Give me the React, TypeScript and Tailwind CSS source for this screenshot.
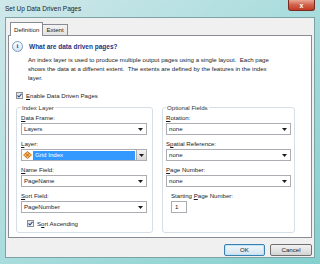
import React from 'react';

const Arrow = () => (
  <svg width="5" height="3" viewBox="0 0 5 3" className="shrink-0">
    <path d="M0 0 L5 0 L2.5 3 Z" fill="#1a1a1a" />
  </svg>
);

const U = ({ children }: { children: React.ReactNode }) => <span className="underline underline-offset-[1px]">{children}</span>;

const Dropdown = ({ value }: { value: string }) => (
  <div className="mt-[1px] flex h-[12px] items-center justify-between border border-[#abadb3] bg-white pl-[2px] pr-[3px]">
    <span className="leading-none">{value}</span>
    <Arrow />
  </div>
);

const Field = ({ label, children }: { label: React.ReactNode; children: React.ReactNode }) => (
  <div className="mb-[4px]">
    <div className="h-[9px] leading-[9px]">{label}</div>
    {children}
  </div>
);

const Checkbox = () => (
  <div className="flex h-[7px] w-[7px] items-center justify-center border border-[#8e8f8f] bg-gradient-to-br from-[#dcdcdc] to-white">
    <svg width="5" height="5" viewBox="0 0 5 5">
      <path d="M0.5 2.5 L2 4 L4.5 0.8" stroke="#2b4a8b" strokeWidth="1.1" fill="none" />
    </svg>
  </div>
);

const LayerIcon = () => (
  <svg width="9" height="8" viewBox="0 0 9 8" className="shrink-0">
    <path d="M4.5 0.5 L8.5 4 L4.5 7.5 L0.5 4 Z" fill="#f3c13a" stroke="#b5651d" strokeWidth="0.8" />
    <path d="M2.5 2.3 L6.5 5.7 M6.5 2.3 L2.5 5.7" stroke="#c0392b" strokeWidth="0.7" />
  </svg>
);

const InfoIcon = () => (
  <div className="flex h-[11px] w-[11px] items-center justify-center rounded-full border border-[#7d9cc4] bg-gradient-to-b from-white to-[#d6e4f5]">
    <span className="font-['Liberation_Serif',serif] text-[7px] font-bold leading-none text-[#2c5aa0]">i</span>
  </div>
);

export default function App() {
  return (
    <div className="flex h-[264px] w-[320px] flex-col bg-gradient-to-br from-[#cfe8ea] via-[#a9dcdd] to-[#84d0ce] px-[5px] pb-[6px] font-['Liberation_Sans',sans-serif] text-[6.1px] text-[#1b1b1b]">
      {/* title bar */}
      <div className="flex h-[17px] items-start">
        <span className="pt-[4px] text-[6.5px] leading-[9px] text-[#222]">Set Up Data Driven Pages</span>
        <div className="ml-auto flex h-[11px] w-[27px] items-center justify-center rounded-b-[3px] border border-t-0 border-[#7a2b1f] bg-gradient-to-b from-[#e9a796] via-[#d0604a] to-[#c13b22]">
          <span className="text-[7px] font-bold leading-none text-white">x</span>
        </div>
      </div>

      {/* dialog body */}
      <div className="flex flex-1 flex-col border border-[#7ea3a6] bg-[#f0f0f0] px-[2px] pt-[4px]">
        {/* tabs */}
        <div className="flex items-end pl-[2px]">
          <div className="relative z-10 -mb-px flex h-[14px] items-center border border-b-0 border-[#898c95] bg-white px-[3px]">Definition</div>
          <div className="flex h-[11px] items-center border border-b-0 border-l-0 border-[#898c95] bg-gradient-to-b from-[#f3f3f3] to-[#e3e3e3] px-[3px]">Extent</div>
        </div>

        {/* tab panel */}
        <div className="flex flex-1 flex-col border border-[#898c95] bg-white pt-[5px]">
          <div className="flex items-center pl-[3px]">
            <InfoIcon />
            <span className="ml-[6px] text-[6.5px] font-bold leading-[9px] text-[#1a3783]">What are data driven pages?</span>
          </div>
          <p className="mt-[3px] whitespace-nowrap pl-[19px] leading-[9px]">
            An index layer is used to produce multiple output pages using a single layout.&nbsp; Each page
            <br />
            shows the data at a different extent.&nbsp; The extents are defined by the features in the index
            <br />
            layer.
          </p>

          <div className="mt-[9px] flex items-center pl-[7px]">
            <Checkbox />
            <span className="ml-[3px] leading-[9px]"><U>E</U>nable Data Driven Pages</span>
          </div>

          <div className="mt-[3px] flex gap-[9px] pl-[7px]">
            {/* Index Layer */}
            <fieldset className="h-[130px] w-[137px] rounded-[3px] border border-[#d5dfe5] px-[4px] pr-[5px]">
              <legend className="px-[1px] leading-[9px] text-[#333]">Index Layer</legend>
              <div className="pt-[1px]">
                <Field label={<><U>D</U>ata Frame:</>}>
                  <Dropdown value="Layers" />
                </Field>
                <Field label={<><U>L</U>ayer:</>}>
                  <div className="mt-[1px] flex h-[12px] items-center border border-[#abadb3] bg-white pl-[1px]">
                    <LayerIcon />
                    <div className="ml-[1px] flex h-[9px] flex-1 items-center bg-[#3399ff] pl-[2px] text-white">Grid Index</div>
                    <div className="ml-[1px] flex h-full w-[10px] items-center justify-center border-l border-[#acacac] bg-gradient-to-b from-[#f2f2f2] to-[#d9d9d9]">
                      <Arrow />
                    </div>
                  </div>
                </Field>
                <Field label={<><U>N</U>ame Field:</>}>
                  <Dropdown value="PageName" />
                </Field>
                <Field label={<><U>S</U>ort Field:</>}>
                  <Dropdown value="PageNumber" />
                </Field>
                <div className="mt-[6px] flex items-center pl-[6px]">
                  <Checkbox />
                  <span className="ml-[3px] leading-[9px]">S<U>o</U>rt Ascending</span>
                </div>
              </div>
            </fieldset>

            {/* Optional Fields */}
            <fieldset className="h-[130px] w-[133px] rounded-[3px] border border-[#d5dfe5] px-[3px]">
              <legend className="px-[1px] leading-[9px] text-[#333]">Optional Fields</legend>
              <div className="pt-[1px]">
                <Field label={<><U>R</U>otation:</>}>
                  <Dropdown value="none" />
                </Field>
                <Field label={<>S<U>p</U>atial Reference:</>}>
                  <Dropdown value="none" />
                </Field>
                <Field label={<><U>P</U>age Number:</>}>
                  <Dropdown value="none" />
                </Field>
                <div className="pl-[5px]">
                  <div className="h-[9px] leading-[9px]">Starting <U>P</U>age Number:</div>
                  <div className="mt-[1px] flex h-[12px] w-[16px] items-center border border-[#abadb3] bg-white pl-[3px]">1</div>
                </div>
              </div>
            </fieldset>
          </div>
        </div>

        {/* buttons */}
        <div className="flex h-[19px] items-start justify-end gap-[5px] pt-[6px]">
          <button className="flex h-[12px] w-[41px] items-center justify-center rounded-[2px] border border-[#3c7fb1] bg-gradient-to-b from-[#f2f8fc] to-[#d3e3ef] shadow-[inset_0_0_0_1px_#bfe3f7]">OK</button>
          <button className="flex h-[12px] w-[42px] items-center justify-center rounded-[2px] border border-[#707070] bg-gradient-to-b from-[#f2f2f2] to-[#d4d4d4]">Cancel</button>
        </div>
      </div>
    </div>
  );
}
